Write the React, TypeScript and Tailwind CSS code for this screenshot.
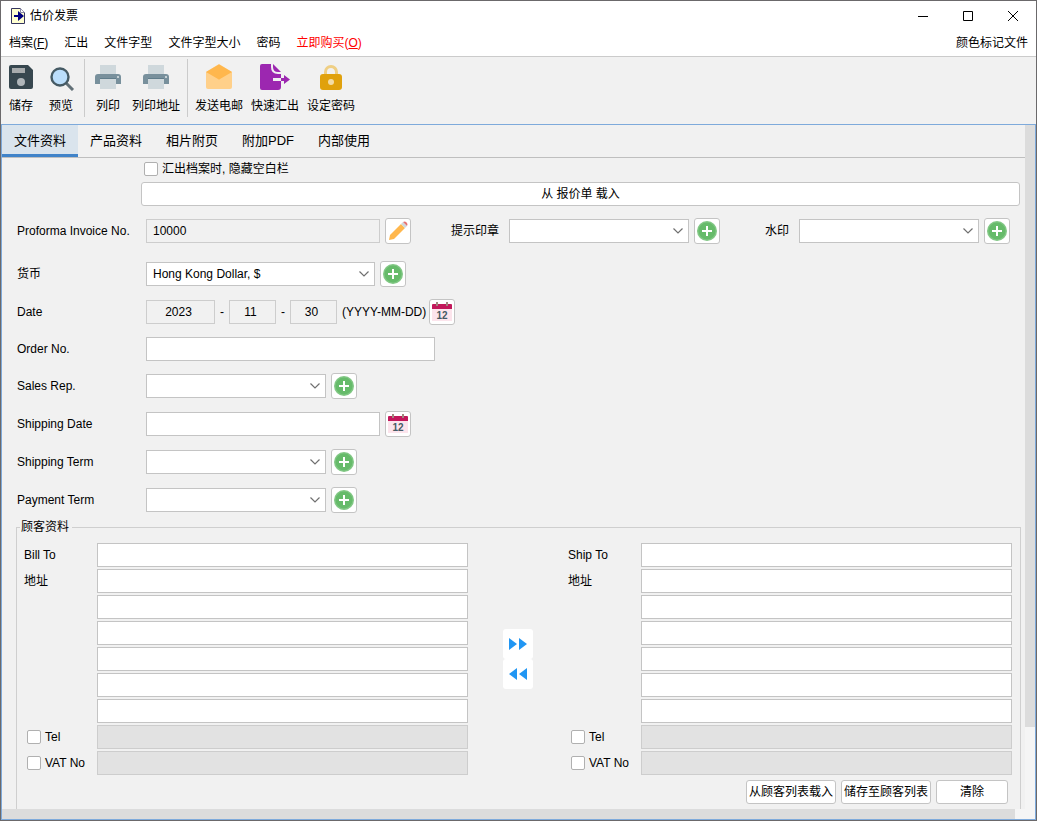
import React from 'react';

interface IconButtonProps {
  label: string;
  children: React.ReactNode;
}

interface SelectBoxProps {
  id: string;
  className: string;
  options?: string[];
}

interface FieldRowProps {
  label: string;
  htmlFor: string;
  className?: string;
  children: React.ReactNode;
}

const SaveIcon = () => (
  <svg viewBox="0 0 28 28" className="w-7 h-7">
    <path d="M4 2h17l5 5v17a2 2 0 0 1-2 2H4a2 2 0 0 1-2-2V4a2 2 0 0 1 2-2z" fill="#37474f" />
    <path d="M5 5h13v5H5z" fill="#a7abad" />
    <circle cx="14" cy="19" r="4" fill="#b0b6ba" />
  </svg>
);

const PreviewIcon = () => (
  <svg viewBox="0 0 28 28" className="w-7 h-7">
    <path d="M19 20l7 7" stroke="#616f76" strokeWidth="3" />
    <circle cx="13" cy="14" r="8.5" fill="#bbdefb" stroke="#455a64" strokeWidth="2.4" />
  </svg>
);

const PrinterIcon = () => (
  <svg viewBox="0 0 28 28" className="w-7 h-7">
    <path d="M6 2h16v10H6z" fill="#cfd8dc" />
    <path d="M4 11h20a3 3 0 0 1 3 3v7H1v-7a3 3 0 0 1 3-3z" fill="#78909c" />
    <path d="M6 15h16v1H6z" fill="#607d8b" />
    <path d="M6 16h16v10H6z" fill="#cfd8dc" />
    <circle cx="24" cy="14" r="1" fill="#dfe6e9" />
  </svg>
);

const MailIcon = () => (
  <svg viewBox="0 0 28 28" className="w-7 h-7">
    <path d="M1 9L14 1l13 8v15a2 2 0 0 1-2 2H3a2 2 0 0 1-2-2z" fill="#ffd08a" />
    <path d="M13 2q1-1 2 0l12 7-12 7q-1 1-2 0L1 9z" fill="#ffb74d" />
  </svg>
);

const ExportIcon = () => (
  <svg viewBox="0 0 30 28" className="w-[30px] h-7">
    <path d="M2 1h9v3q0 7 7 7h3v13a3 3 0 0 1-3 3H2a2 2 0 0 1-2-2V3a2 2 0 0 1 2-2z" fill="#9c27b0" />
    <path d="M13 1l8 8h-3q-5 0-5-5z" fill="#9c27b0" />
    <path d="M13 15h8v3h-8z" fill="#f1f1f1" />
    <path d="M21 15h3v-3l6 4.500-6 4.500v-3h-3z" fill="#9c27b0" />
  </svg>
);

const LockIcon = () => (
  <svg viewBox="0 0 28 28" className="w-7 h-7">
    <path d="M8.500 12V9a5.500 5.500 0 0 1 11 0v3" fill="none" stroke="#efcf84" strokeWidth="3" />
    <rect x="3" y="11" width="22" height="16" rx="3" fill="#e0a10d" />
    <circle cx="14" cy="19" r="3" fill="#f3dca6" />
  </svg>
);

const PlusIcon = () => (
  <svg viewBox="0 0 20 20" className="w-5 h-5">
    <circle cx="10" cy="10" r="10" fill="#81c784" />
    <circle cx="10" cy="10" r="8.500" fill="#66bb6a" />
    <path d="M9 5h2v4h4v2h-4v4H9v-4H5V9h4z" fill="#fff" />
  </svg>
);

const PencilIcon = () => (
  <svg viewBox="0 0 20 20" className="w-5 h-5">
    <path d="M2 14L13 3l4 4L6 18l-5 1z" fill="#ffb74d" />
    <path d="M13 3l2-2 4 4-2 2z" fill="#cfd8dc" />
    <path d="M15 1q2-1 3 0l1 1q1 1 0 3z" fill="#e57373" />
  </svg>
);

const CalendarIcon = () => (
  <svg viewBox="0 0 20 20" className="w-5 h-5">
    <path d="M0 6h20v13H0z" fill="#fce4ec" />
    <path d="M0 3a1 1 0 0 1 1-1h18a1 1 0 0 1 1 1v4H0z" fill="#c2185b" />
    <path d="M4 0h2v4H4zM14 0h2v4h-2z" fill="#a1887f" />
    <text x="10" y="17" textAnchor="middle" className="text-[10px] font-bold" fill="#455a64">12</text>
  </svg>
);

const IconButton: React.FC<IconButtonProps> = ({ label, children }) => (
  <button
    aria-label={label}
    className="w-[26px] h-[26px] shrink-0 flex items-center justify-center bg-white border border-[#c4c4c4] rounded-[3px]"
  >
    {children}
  </button>
);

const AddButton = () => (
  <IconButton label="新增">
    <PlusIcon />
  </IconButton>
);

const SelectBox: React.FC<SelectBoxProps> = ({ id, className, options = [''] }) => (
  <div className={`relative ${className}`}>
    <select id={id} className="appearance-none w-full h-6 pl-1.5 pr-6 bg-white border border-[#c4c4c4] text-xs">
      {options.map((option) => (
        <option key={option}>{option}</option>
      ))}
    </select>
    <svg viewBox="0 0 10 6" className="absolute right-1.5 top-[9px] w-2.5 h-1.5 pointer-events-none">
      <path d="M.5.5L5 5 9.500.5" fill="none" stroke="#707070" strokeWidth="1.2" />
    </svg>
  </div>
);

const FieldRow: React.FC<FieldRowProps> = ({ label, htmlFor, className = 'h-[38px]', children }) => (
  <div className={`flex items-center gap-[5px] ${className}`}>
    <label htmlFor={htmlFor} className="w-[124px] shrink-0 whitespace-nowrap">{label}</label>
    {children}
  </div>
);

const addressLines = [1, 2, 3, 4, 5, 6];
const optionalFields = [
  { id: 'tel', label: 'Tel' },
  { id: 'vat', label: 'VAT No' },
];

const AddressBlock = ({ id, title }: { id: string; title: string }) => (
  <div className="flex flex-col gap-0.5">
    <div className="flex items-center">
      <label htmlFor={`${id}-name`} className="w-[73px] shrink-0">{title}</label>
      <input id={`${id}-name`} className="flex-1 min-w-0 h-6 px-1.5 bg-white border border-[#c4c4c4]" />
    </div>
    {addressLines.map((line) => (
      <div key={line} className="flex items-center">
        <label htmlFor={`${id}-address-${line}`} className="w-[73px] shrink-0">{line === 1 ? '地址' : ''}</label>
        <input
          id={`${id}-address-${line}`}
          aria-label={`地址 ${line}`}
          className="flex-1 min-w-0 h-6 px-1.5 bg-white border border-[#c4c4c4]"
        />
      </div>
    ))}
    {optionalFields.map((field) => (
      <div key={field.id} className="flex items-center">
        <label className="w-[73px] shrink-0 pl-[3px] flex items-center gap-1 whitespace-nowrap">
          <input type="checkbox" className="appearance-none w-3.5 h-3.5 shrink-0 bg-white border border-[#b0b0b0] rounded-xs checked:bg-[#3f80cc]" />
          {field.label}
        </label>
        <input disabled aria-label={field.label} className="flex-1 min-w-0 h-6 px-1.5 bg-[#e2e2e2] border border-[#cdcdcd]" />
      </div>
    ))}
  </div>
);

const menuItems = ['汇出', '文件字型', '文件字型大小', '密码'];
const tabs = ['文件资料', '产品资料', '相片附页', '附加PDF', '内部使用'];
const toolGroups = [
  {
    className: 'pl-[5px] pr-2 gap-2.5 border-r',
    items: [
      { label: '储存', width: 'w-[30px]', icon: <SaveIcon /> },
      { label: '预览', width: 'w-[30px]', icon: <PreviewIcon /> },
    ],
  },
  {
    className: 'pl-2 pr-[7px] gap-[9px] border-r',
    items: [
      { label: '列印', width: 'w-[30px]', icon: <PrinterIcon /> },
      { label: '列印地址', width: 'w-12', icon: <PrinterIcon /> },
    ],
  },
  {
    className: 'pl-[7px] gap-2',
    items: [
      { label: '发送电邮', width: 'w-12', icon: <MailIcon /> },
      { label: '快速汇出', width: 'w-12', icon: <ExportIcon /> },
      { label: '设定密码', width: 'w-12', icon: <LockIcon /> },
    ],
  },
];

const App = () => {
  return (
    <div className="min-h-screen flex flex-col border border-[#6b696b] bg-[#f1f1f1] text-black text-xs font-['Liberation_Sans','Noto_Sans_CJK_SC',sans-serif]">
      {/* Title bar */}
      <header className="bg-white border-b border-[#cbcbcb]">
        <div className="h-[29px] flex items-center pl-2.5 pr-px">
          <svg viewBox="0 0 14 16" className="w-3.5 h-4">
            <path d="M.5.5h9l4 4v11H.5z" fill="#ffffd0" stroke="#34345f" />
            <path d="M9.500.5v4h4" fill="#fff" stroke="#8888a8" />
            <path d="M3 7h4V3l6 5-6 5V9H3z" fill="#000080" />
          </svg>
          <h1 className="ml-[5px] flex-1">估价发票</h1>
          <button aria-label="Minimize" className="w-[45px] h-full flex items-center justify-center">
            <svg viewBox="0 0 10 10" className="w-2.5 h-2.5"><path d="M0 5h10v1H0z" /></svg>
          </button>
          <button aria-label="Maximize" className="w-[45px] h-full flex items-center justify-center">
            <svg viewBox="0 0 10 10" className="w-2.5 h-2.5"><path d="M.5.5h9v9h-9z" fill="none" stroke="#000" /></svg>
          </button>
          <button aria-label="Close" className="w-[45px] h-full flex items-center justify-center">
            <svg viewBox="0 0 10 10" className="w-2.5 h-2.5"><path d="M0 0l10 10M10 0L0 10" stroke="#000" /></svg>
          </button>
        </div>
        <nav className="h-[26px] flex items-center gap-4 px-2">
          <button>档案(<u>F</u>)</button>
          {menuItems.map((item) => (
            <button key={item}>{item}</button>
          ))}
          <button className="text-[#ff0000]">立即购买(<u>O</u>)</button>
          <button className="ml-auto">颜色标记文件</button>
        </nav>
      </header>

      {/* Toolbar */}
      <div className="flex pt-0.5 pb-[7px]">
        {toolGroups.map((group, index) => (
          <div key={index} className={`flex border-[#cbcbcb] ${group.className}`}>
            {group.items.map((item) => (
              <button key={item.label} className={`pt-1 flex flex-col items-center gap-1.5 whitespace-nowrap ${item.width}`}>
                {item.icon}
                <span className="h-5 leading-[18px]">{item.label}</span>
              </button>
            ))}
          </div>
        ))}
      </div>

      {/* Document area */}
      <main className="flex-1 flex flex-col border border-[#7eaadb]">
        <div className="flex-1 flex">
          <div className="flex-1 min-w-0 flex flex-col">
            <div role="tablist" className="flex border-b border-[#bfbfbf]">
              {tabs.map((tab, index) => (
                <button
                  key={tab}
                  role="tab"
                  aria-selected={index === 0}
                  className={`h-8 px-3 pt-[3px] text-[13px] border-b-3 ${
                    index === 0 ? 'bg-[#dae4ed] border-[#4083c9]' : 'border-transparent'
                  }`}
                >
                  {tab}
                </button>
              ))}
            </div>

            <label className="h-6 pb-0.5 ml-[142px] flex items-center gap-1 self-start">
              <input type="checkbox" className="appearance-none w-3.5 h-3.5 bg-white border border-[#b0b0b0] rounded-xs checked:bg-[#3f80cc]" />
              汇出档案时, 隐藏空白栏
            </label>
            <button className="h-6 ml-[139px] mr-[5px] bg-white border border-[#c4c4c4] rounded-[3px]">从 报价单 载入</button>

            <div className="pl-[15px] pt-px">
              <FieldRow label="Proforma Invoice No." htmlFor="invoice-no" className="h-12">
                <input id="invoice-no" readOnly defaultValue="10000" className="w-[234px] h-6 px-1.5 border border-[#cdcdcd]" />
                <IconButton label="编辑"><PencilIcon /></IconButton>
                <label htmlFor="stamp" className="ml-[35px] w-[53px] whitespace-nowrap">提示印章</label>
                <SelectBox id="stamp" className="w-[180px]" />
                <AddButton />
                <label htmlFor="watermark" className="ml-10 w-[29px] whitespace-nowrap">水印</label>
                <SelectBox id="watermark" className="w-[180px]" />
                <AddButton />
              </FieldRow>
              <FieldRow label="货币" htmlFor="currency">
                <SelectBox id="currency" className="w-[229px]" options={['Hong Kong Dollar, $']} />
                <AddButton />
              </FieldRow>
              <FieldRow label="Date" htmlFor="date-year">
                <input id="date-year" readOnly defaultValue="2023" className="w-[69px] h-6 pr-1 text-center border border-[#cdcdcd]" />
                <span className="w-1">-</span>
                <input aria-label="Month" readOnly defaultValue="11" className="w-[47px] h-6 pr-1 text-center border border-[#cdcdcd]" />
                <span className="w-1">-</span>
                <input aria-label="Day" readOnly defaultValue="30" className="w-[47px] h-6 pr-1 text-center border border-[#cdcdcd]" />
                <span className="w-[82px] whitespace-nowrap">(YYYY-MM-DD)</span>
                <IconButton label="日历"><CalendarIcon /></IconButton>
              </FieldRow>
              <FieldRow label="Order No." htmlFor="order-no" className="h-9">
                <input id="order-no" className="w-[289px] h-6 px-1.5 bg-white border border-[#c4c4c4]" />
              </FieldRow>
              <FieldRow label="Sales Rep." htmlFor="sales-rep">
                <SelectBox id="sales-rep" className="w-[180px]" />
                <AddButton />
              </FieldRow>
              <FieldRow label="Shipping Date" htmlFor="shipping-date">
                <input id="shipping-date" className="w-[234px] h-6 px-1.5 bg-white border border-[#c4c4c4]" />
                <IconButton label="日历"><CalendarIcon /></IconButton>
              </FieldRow>
              <FieldRow label="Shipping Term" htmlFor="shipping-term">
                <SelectBox id="shipping-term" className="w-[180px]" />
                <AddButton />
              </FieldRow>
              <FieldRow label="Payment Term" htmlFor="payment-term">
                <SelectBox id="payment-term" className="w-[180px]" />
                <AddButton />
              </FieldRow>
            </div>

            {/* Customer */}
            <fieldset className="flex-1 ml-3.5 mr-1 pl-[7px] pr-2 pt-2 pb-1 border border-b-0 border-[#cfcfcf]">
              <legend className="-ml-1 pl-px pr-[3px] leading-4">顾客资料</legend>
              <div className="grid grid-cols-[1fr_100px_1fr]">
                <AddressBlock id="bill" title="Bill To" />
                <div className="flex flex-col items-center justify-center">
                  <button aria-label="复制到 Ship To" className="w-[30px] h-[30px] flex items-center justify-center bg-white rounded-[3px]">
                    <svg viewBox="0 0 18 12" className="w-[18px] h-3"><path d="M0 0l8 6-8 6zM10 0l8 6-8 6z" fill="#2196f3" /></svg>
                  </button>
                  <button aria-label="复制到 Bill To" className="w-[30px] h-[30px] flex items-center justify-center bg-white rounded-[3px]">
                    <svg viewBox="0 0 18 12" className="w-[18px] h-3"><path d="M8 0v12L0 6zM18 0v12l-8-6z" fill="#2196f3" /></svg>
                  </button>
                </div>
                <AddressBlock id="ship" title="Ship To" />
              </div>
              <div className="flex justify-end gap-[5px] mt-[5px] pr-1">
                <button className="w-[90px] h-6 whitespace-nowrap bg-white border border-[#c4c4c4] rounded-[3px]">从顾客列表载入</button>
                <button className="w-[90px] h-6 whitespace-nowrap bg-white border border-[#c4c4c4] rounded-[3px]">储存至顾客列表</button>
                <button className="w-[72px] h-6 bg-white border border-[#c4c4c4] rounded-[3px]">清除</button>
              </div>
            </fieldset>
          </div>
          {/* Vertical scrollbar */}
          <div className="w-2.5 flex flex-col bg-[#f5f5f5]">
            <div className="h-[88%] bg-[#dcdcdc]"></div>
          </div>
        </div>
        {/* Horizontal scrollbar */}
        <div className="h-2.5 pr-5 bg-[#f5f5f5]">
          <div className="h-full bg-[#dcdcdc]"></div>
        </div>
      </main>
    </div>
  );
};

export default App;
